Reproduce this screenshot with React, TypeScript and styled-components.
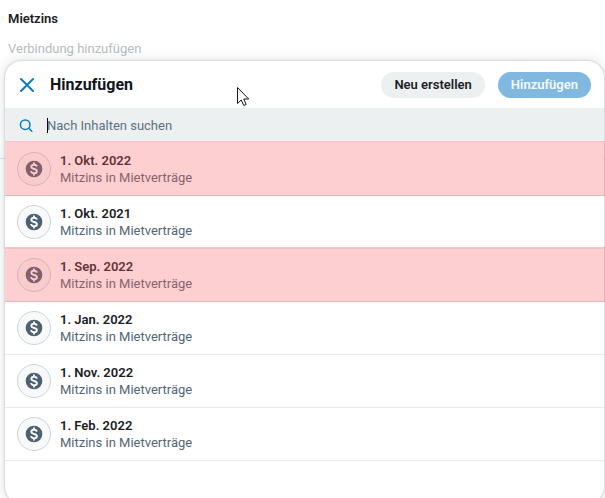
import React from "react";
import styled, { createGlobalStyle, css } from "styled-components";

const GlobalStyle = createGlobalStyle`
  * { box-sizing: border-box; }
  body {
    margin: 0;
    background: #ffffff;
    font-family: Roboto, "Liberation Sans", sans-serif;
    font-size: 13px;
    color: #1c2024;
  }
`;

const Page = styled.main`
  position: relative;
  height: 100vh;
  overflow: hidden;
`;

const Field = styled.section`
  display: flex;
  flex-direction: column;
  gap: 14px;
  min-height: 159px;
  padding: 11px 8px;
  border-bottom: 1px solid #dfe4e6;
`;

const FieldLabel = styled.h2`
  margin: 0;
  font-size: 13px;
  line-height: 16px;
  font-weight: 600;
`;

const FieldPlaceholder = styled.p`
  margin: 0;
  line-height: 16px;
  color: #b7bcc3;
`;

const Dialog = styled.div`
  position: absolute;
  top: 61px;
  left: 5px;
  right: 1px;
  background: #ffffff;
  border-radius: 16px;
  box-shadow: 0 0 2px rgba(40, 50, 60, 0.36), 0 0 14px rgba(40, 50, 60, 0.16);
`;

const Header = styled.header`
  display: flex;
  align-items: center;
  height: 47px;
  padding: 0 13px 0 14px;
`;

const CloseButton = styled.button`
  display: flex;
  padding: 0;
  border: 0;
  background: none;
  color: #0b7bc6;
`;

const Title = styled.h1`
  flex: 1;
  margin: 0 0 0 15px;
  font-size: 16px;
  line-height: 20px;
  font-weight: 700;
  color: #12161a;
`;

const Actions = styled.div`
  display: flex;
  gap: 13px;
`;

const PillButton = styled.button<{ $primary?: boolean }>`
  height: 26px;
  padding: 0 13px;
  border: 0;
  border-radius: 13px;
  font: 600 13px/16px Roboto, "Liberation Sans", sans-serif;
  background: ${(p) => (p.$primary ? "#80b8df" : "#ecf0f1")};
  color: ${(p) => (p.$primary ? "#f5faff" : "#1c2024")};
`;

const SearchBar = styled.label`
  display: flex;
  align-items: center;
  gap: 13px;
  height: 33px;
  padding: 2px 14px 0;
  background: #ecf0f1;
  color: #0b7bc6;
`;

const SearchEntry = styled.div`
  display: flex;
  flex: 1;
  align-items: center;
`;

const Caret = styled.span`
  width: 1px;
  height: 15px;
  margin-right: -1px;
  background: #000000;
`;

const SearchInput = styled.input`
  flex: 1;
  min-width: 0;
  padding: 0;
  border: 0;
  outline: 0;
  background: transparent;
  font: 400 13px/16px Roboto, "Liberation Sans", sans-serif;
  &::placeholder {
    color: #60707d;
    opacity: 1;
  }
`;

const List = styled.ul`
  margin: 0;
  padding: 2px 0 42px;
  list-style: none;
`;

const Item = styled.li<{ $marked?: boolean }>`
  position: relative;
  display: flex;
  align-items: center;
  gap: 9px;
  height: 53px;
  padding: 0 12px;
  border-bottom: 1px solid #e8ebec;
  ${(p) =>
    p.$marked &&
    css`
      &::after {
        content: "";
        position: absolute;
        inset: -2px -1px -1px 0;
        border: solid rgba(190, 60, 60, 0.08);
        border-width: 1px 0;
        background: rgba(252, 95, 98, 0.3);
        pointer-events: none;
      }
    `}
`;

const Badge = styled.span`
  display: flex;
  align-items: center;
  justify-content: center;
  width: 34px;
  height: 34px;
  border: 1px solid #ccd5da;
  border-radius: 50%;
  background: #f7f9fa;
  color: #4d6170;
`;

const ItemText = styled.div`
  display: flex;
  flex-direction: column;
  line-height: 17px;
`;

const ItemTitle = styled.strong`
  font-weight: 600;
`;

const ItemMeta = styled.span`
  color: #536575;
`;

const Pointer = styled.svg`
  position: absolute;
  top: 86px;
  left: 236px;
  pointer-events: none;
`;

const entries = [
  { date: "1. Okt. 2022", marked: true },
  { date: "1. Okt. 2021" },
  { date: "1. Sep. 2022", marked: true },
  { date: "1. Jan. 2022" },
  { date: "1. Nov. 2022" },
  { date: "1. Feb. 2022" },
];

const CloseIcon = () => (
  <svg width="16" height="16" viewBox="0 0 16 16" fill="none" stroke="currentColor" strokeWidth="2" strokeLinecap="round" aria-hidden="true">
    <path d="M2 2l12 12M14 2L2 14" />
  </svg>
);

const SearchIcon = () => (
  <svg width="15" height="15" viewBox="0 0 15 15" fill="none" stroke="currentColor" strokeWidth="1.5" strokeLinecap="round" aria-hidden="true">
    <circle cx="6.2" cy="6.7" r="4.8" />
    <path d="M9.8 10.3l3 3" />
  </svg>
);

const MoneyIcon = () => (
  <svg width="20" height="20" viewBox="0 0 24 24" aria-hidden="true">
    <circle cx="12" cy="12" r="10" fill="currentColor" />
    <path
      d="M15.300 9.200c-.2-1.600-1.400-2.400-3.200-2.400-1.900 0-3.300.9-3.300 2.500 0 3.500 6.700 1.800 6.700 5.300 0 1.600-1.400 2.500-3.400 2.500-2.100 0-3.400-.9-3.600-2.700M12 4.200v2.600M12 17.200v2.600"
      fill="none"
      stroke="#f7f9fa"
      strokeWidth="2.300"
    />
  </svg>
);

export default function App() {
  return (
    <>
      <GlobalStyle />
      <Page>
        <Field>
          <FieldLabel>Mietzins</FieldLabel>
          <FieldPlaceholder>Verbindung hinzufügen</FieldPlaceholder>
        </Field>
        <Dialog role="dialog" aria-labelledby="dialog-title">
          <Header>
            <CloseButton type="button" aria-label="Schließen">
              <CloseIcon />
            </CloseButton>
            <Title id="dialog-title">Hinzufügen</Title>
            <Actions>
              <PillButton type="button">Neu erstellen</PillButton>
              <PillButton type="button" $primary>
                Hinzufügen
              </PillButton>
            </Actions>
          </Header>
          <SearchBar>
            <SearchIcon />
            <SearchEntry>
              <Caret />
              <SearchInput type="text" aria-label="Nach Inhalten suchen" placeholder="Nach Inhalten suchen" />
            </SearchEntry>
          </SearchBar>
          <List>
            {entries.map((entry) => (
              <Item key={entry.date} $marked={entry.marked}>
                <Badge>
                  <MoneyIcon />
                </Badge>
                <ItemText>
                  <ItemTitle>{entry.date}</ItemTitle>
                  <ItemMeta>Mitzins in Mietverträge</ItemMeta>
                </ItemText>
              </Item>
            ))}
          </List>
        </Dialog>
        <Pointer width="14" height="21" viewBox="0 0 14 21" fill="#ffffff" stroke="#16181c" strokeWidth="1" aria-hidden="true">
          <path d="M1.500 1.500v16l3.700-3.500 2.600 5.500 2.400-1.100-2.500-5.400h5z" />
        </Pointer>
      </Page>
    </>
  );
}
